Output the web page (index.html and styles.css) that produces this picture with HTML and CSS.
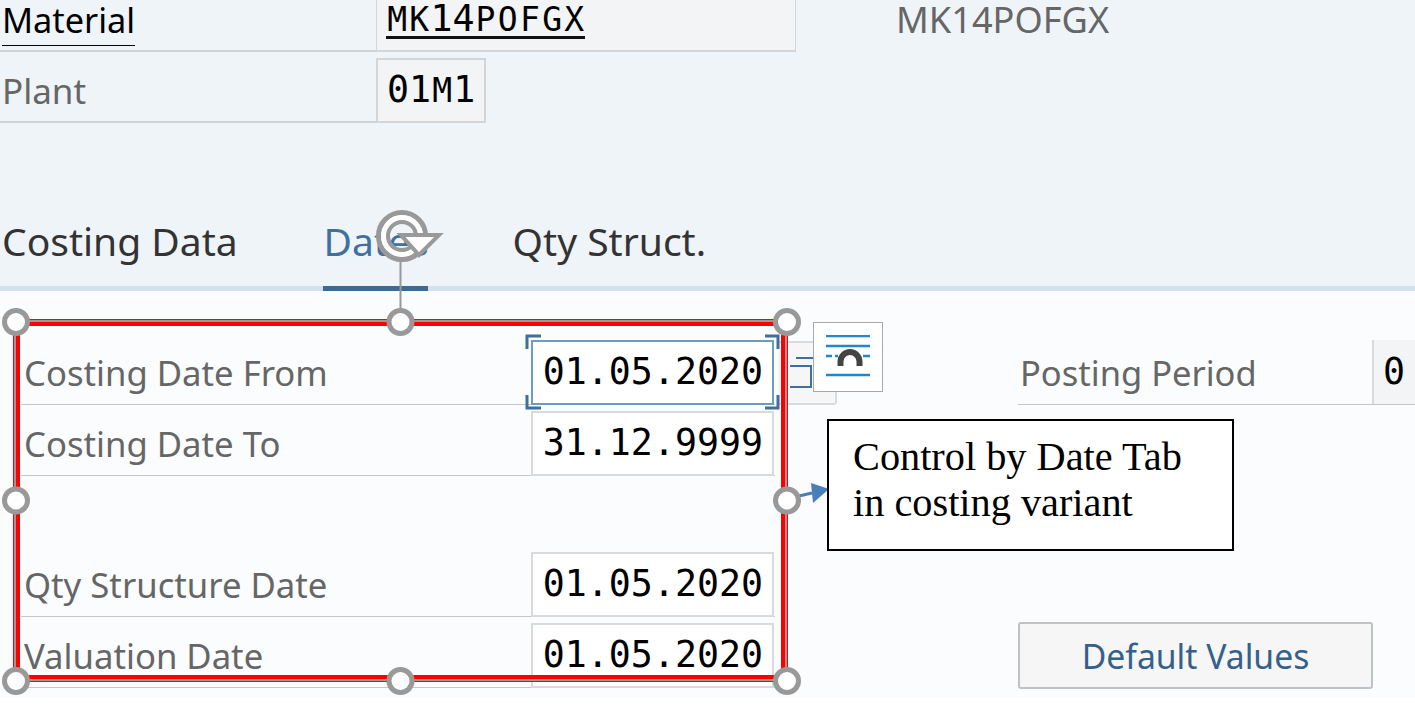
FILE: index.html
```html
<!DOCTYPE html>
<html lang="en">
<head>
<meta charset="utf-8">
<title>Costing Dates</title>
<link rel="stylesheet" href="styles.css">
</head>
<body>
<div class="page">
  <header class="head">
    <div class="row row-material">
      <div class="lab"><span class="lab-u">Material</span></div>
      <div class="val val-wide"><span class="mono mono-u"><span class="sc">M</span><span class="sc">K</span>14<span class="sc">P</span><span class="sc">O</span><span class="sc">F</span><span class="sc">G</span><span class="sc">X</span></span></div>
      <div class="desc">MK14POFGX</div>
    </div>
    <div class="row row-plant">
      <div class="lab lab-muted">Plant</div>
      <div class="val val-plant"><span class="mono">01<span class="sc">M</span>1</span></div>
    </div>
    <nav class="tabs">
      <span class="tab tab-first">Costing Data</span>
      <span class="tab tab-on">Dates</span>
      <span class="tab">Qty Struct.</span>
    </nav>
  </header>
  <main class="body">
    <div class="col-left">
      <div class="f f-first"><span class="flab">Costing Date From</span><span class="fval fval-focus mono">01.05.2020</span></div>
      <div class="f"><span class="flab">Costing Date To</span><span class="fval mono">31.12.9999</span></div>
      <div class="f f-gap"><span class="flab">Qty Structure Date</span><span class="fval mono">01.05.2020</span></div>
      <div class="f"><span class="flab">Valuation Date</span><span class="fval mono">01.05.2020</span></div>
    </div>
    <div class="col-right">
      <div class="post"><span class="post-lab">Posting Period</span><span class="post-val mono">0</span></div>
      <button class="btn">Default Values</button>
    </div>
  </main>

  <!-- elements lying over the form: drawn annotation -->
  <div class="vh-btn"></div>
  <svg class="overlay" width="1415" height="704" viewBox="0 0 1415 704">
    <g fill="none">
      <rect x="16.500" y="322.500" width="768" height="356" stroke="#f00" stroke-width="7"/>
      <rect x="15" y="321" width="771" height="359" stroke="#999" stroke-width="2"/>
      <path d="M799 496 L812 493" stroke="#4a7ebb" stroke-width="3"/>
      <path d="M829 489 L811 483 L813 503 Z" fill="#4a7ebb"/>
      <path d="M400.500 310V260" stroke="#999" stroke-width="2"/>
      <g stroke="#999" stroke-width="5" fill="#fff">
        <circle cx="16" cy="322" r="11.500"/><circle cx="400.500" cy="322" r="11.500"/><circle cx="787" cy="322" r="11.500"/>
        <circle cx="16" cy="500.500" r="11.500"/><circle cx="787" cy="500.500" r="11.500"/>
        <circle cx="16" cy="681" r="11.500"/><circle cx="400.500" cy="681" r="11.500"/><circle cx="787" cy="681" r="11.500"/>
      </g>
      <!-- rotate handle -->
      <circle cx="402" cy="236" r="23.500" stroke="#999" stroke-width="5"/>
      <circle cx="402" cy="236" r="18.500" stroke="#fff" stroke-width="5"/>
      <circle cx="402" cy="236" r="14" stroke="#999" stroke-width="4"/>
      <path d="M401 235H439L419 255Z" fill="#fff" stroke="#999" stroke-width="4"/>
      <!-- focus brackets -->
      <path d="M541 336H527V349M527 395V408H541M765 336H778V349M778 395V408H765" stroke="#3f6f9c" stroke-width="3"/>
      <!-- value-help icon sliver -->
      <path d="M796 358H813M790 366H811V387H790" stroke="#3f6f9c" stroke-width="2"/>
    </g>
  </svg>
  <div class="layout-btn">
    <svg width="44" height="44" viewBox="0 0 44 44" fill="none">
      <path d="M0 1H44M0 11H44M0 40H44" stroke="#1f88c9" stroke-width="2.500"/>
      <path d="M0 21H6M9 21H12M37 21H44" stroke="#1f88c9" stroke-width="2.500"/>
      <path d="M14.500 31V26.500A9.500 9.500 0 0 1 33.500 26.500V31" stroke="#444" stroke-width="6"/>
    </svg>
  </div>
  <div class="note">Control by Date Tab<br>in costing variant</div>
</div>
</body>
</html>
```

FILE: styles.css
```css
* { box-sizing: border-box; }
html, body { margin: 0; padding: 0; background: #fff; overflow: hidden; }
.page { position: relative; width: 1415px; height: 704px; font-family: "Noto Sans", "Open Sans", sans-serif; color: #666; }
.mono { font-family: "DejaVu Sans Mono", "Liberation Mono", monospace; font-size: 36.600px; color: #000; letter-spacing: 0; }
.sc { display: inline-block; width: 22.200px; font-size: 33px; text-align: center; }

.head { height: 291px; background: #eff4f9; border-bottom: 5px solid #d3e0ed; display: flex; flex-direction: column; }
.row { display: flex; }
.row-material { height: 52px; }
.row-plant { height: 65px; margin-top: 6px; }
.lab { width: 376px; flex: none; border-bottom: 2px solid #cfd3d6; padding-left: 2px; font-size: 34.300px; color: #000; display: flex; align-items: center; line-height: 46px; }
.row-material .lab { align-items: flex-start; }
.lab-u { border-bottom: 1px solid #000; height: 46px; line-height: 40px; }
.lab-muted { color: #666; font-size: 35px; padding-top: 2px; }
.val { background: #f3f4f5; border: 2px solid #d3d6d9; display: flex; align-items: center; padding-left: 9px; }
.val-wide { width: 420px; border-top: 0; border-left-width: 1px; border-right-width: 1px; padding-bottom: 10px; }
.val-plant { width: 110px; padding-bottom: 3px; }
.mono-u { border-bottom: 3px solid #111; line-height: 35px; height: 38px; }
.desc { font-size: 36.200px; color: #666; margin-left: 100px; line-height: 38px; }

.tabs { display: flex; margin-top: 95px; height: 68px; align-items: flex-start; }
.tab { font-size: 39px; color: #333; line-height: 46px; margin-right: 85px; height: 73px; white-space: nowrap; }
.tab-first { margin-left: 2px; margin-right: 85px; }
.tab-on { color: #3f709f; border-bottom: 5px solid #3a6a96; padding-left: 1px; width: 105px; overflow: hidden; }

.body { height: 406px; background: #fbfcfe; display: flex; padding-top: 49px; }
.col-left { width: 775px; flex: none; padding-left: 21px; display: flex; flex-direction: column; }
.f { display: flex; height: 71px; padding-top: 6px; border-bottom: 1px solid #c4c8cb; }
.f-first { height: 65px; padding-top: 0; }
.f-gap { margin-top: 70px; }
.flab { width: 510px; flex: none; align-self: flex-end; font-size: 34.700px; padding: 0 0 8px 3px; line-height: 46px; color: #666; }
.fval { width: 243px; flex: none; background: #fff; border: 2px solid #d8dadc; display: flex; align-items: center; justify-content: flex-end; padding: 0 9px 3px 0; margin-bottom: -1px; }
.fval-focus { border: 2px solid #6f9bc0; }
.col-right { margin-left: 243px; flex: 1; display: flex; flex-direction: column; }
.post { display: flex; height: 65px; border-bottom: 1px solid #c4c8cb; }
.post-lab { width: 354px; flex: none; font-size: 34.500px; padding: 10px 0 0 2px; line-height: 46px; }
.post-val { flex: 1; background: #f3f4f5; border-left: 2px solid #d9dcde; padding-left: 9px; line-height: 63px; }
.btn { width: 355px; height: 67px; margin-top: 217px; background: #f6f6f7; border: 2px solid #bfc2c5; border-radius: 3px; font: inherit; font-size: 33.700px; color: #34618c; padding: 0; }

.vh-btn { position: absolute; left: 778px; top: 341px; width: 59px; height: 64px; background: #f6f6f7; border: 2px solid #d9dcde; border-left: 0; border-radius: 0 0 3px 0; }
.overlay { position: absolute; left: 0; top: 0; }
.layout-btn { position: absolute; left: 813px; top: 322px; width: 70px; height: 70px; background: #fff; border: 1px solid #aaa; padding: 12px; display: flex; }
.note { position: absolute; left: 827px; top: 419px; width: 407px; height: 132px; background: #fff; border: 2px solid #000; padding: 13px 0 0 24px; font-family: "Liberation Serif", serif; font-size: 40.300px; line-height: 46px; color: #000; }
```
